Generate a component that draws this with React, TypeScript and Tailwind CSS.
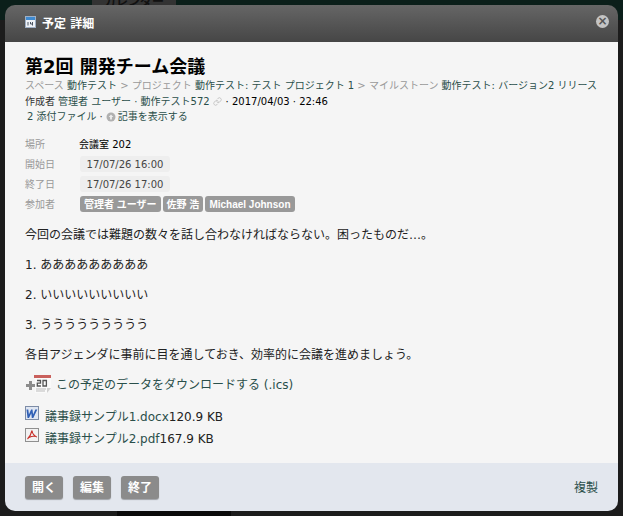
import { Link } from "lucide-react";

const font = { fontFamily: '"DejaVu Sans", "Noto Sans CJK JP", sans-serif' };
const badgeFont = { fontFamily: '"Liberation Sans", "Noto Sans CJK JP", sans-serif' };

function CalendarIcon() {
  return (
    <svg width="11" height="12" viewBox="0 0 11 12" className="mt-[-4px]">
      <rect x="0.5" y="0.5" width="10" height="11" fill="#eef2f7" stroke="#9fb0c6" />
      <rect x="1" y="1" width="9" height="3" fill="#3f8ad0" />
      <path d="M3 6v3.5M5.5 6v2h2M7.5 6v3.5" stroke="#4a5563" strokeWidth="1" fill="none" />
    </svg>
  );
}

function AddCalendarIcon() {
  return (
    <svg width="26" height="19" viewBox="0 0 26 19">
      <path d="M4 6h3v3h3v3H7v3H4v-3H1V9h3z" fill="#8c8c8c" />
      <path d="M10 3h16v10l-4 5H10z" fill="#fafafa" />
      <rect x="9" y="0" width="17" height="3" fill="#c9605c" />
      <path d="M11 14h10M11 16h9" stroke="#bbb" strokeWidth="1" />
      <path d="M22 18l4-5h-4z" fill="#d0d0d0" />
      <path d="M12 5.5h3.5v2.6h-3.2v2.9h3.6M18 5.5h3.4v5.5H18z" fill="none" stroke="#555" strokeWidth="1.3" />
    </svg>
  );
}

function WordIcon() {
  return (
    <svg width="14" height="14" viewBox="0 0 14 14">
      <rect x="0.5" y="0.5" width="13" height="13" fill="#dfe6f2" stroke="#7d8ca6" />
      <path d="M1.5 3.5h1.8l.6 5 2.2-5h1.4l.6 5 2.2-5h2l-4 8.5H6.8L6.3 7.2 4 12H2.5z" fill="#2f5fb5" />
    </svg>
  );
}

function PdfIcon() {
  return (
    <svg width="14" height="14" viewBox="0 0 14 14">
      <rect x="0.5" y="0.5" width="13" height="13" fill="#f2f2f2" stroke="#8f8f8f" />
      <path d="M7 2.5c-.6 2.5-2 6-4.5 8.5M7 2.5c.3 3 2.5 6 5 6.5M4 9.5c2-1 5-1.5 7-1" fill="none" stroke="#c8322c" strokeWidth="1.1" />
    </svg>
  );
}

function ExpandIcon() {
  return (
    <svg width="10" height="10" viewBox="0 0 10 10" className="mr-[2px]">
      <circle cx="5" cy="5" r="4.5" fill="#b0b0b0" />
      <path d="M5 2.5l2.3 2.6H5.9v2.4H4.1V5.1H2.7z" fill="#eeeeee" />
    </svg>
  );
}

function Row({ label, children }: { label: string; children: React.ReactNode }) {
  return (
    <div className="flex h-5 items-center">
      <div className="w-[55px] text-[#999]">{label}</div>
      {children}
    </div>
  );
}

function DateValue({ text }: { text: string }) {
  return <span className="flex h-4 w-[90px] items-center justify-center rounded-[3px] bg-[#eeeeee] text-[#444]">{text}</span>;
}

function Badge({ text }: { text: string }) {
  return (
    <span className="flex h-4 items-center rounded-[3px] bg-[#999] px-[4px] text-[10px] font-bold text-white" style={badgeFont}>
      {text}
    </span>
  );
}

function FooterButton({ text }: { text: string }) {
  return (
    <button className="h-[23px] w-[38px] rounded-[3px] bg-[#8b8b8b] text-[12px] font-bold text-white shadow-[0_1px_1px_rgba(0,0,0,0.3)]">
      {text}
    </button>
  );
}

export default function App() {
  return (
    <div className="relative h-[516px] w-[623px] overflow-hidden bg-[#1c1c1c] p-[5px]" style={font}>
      {/* page behind the overlay */}
      <div className="absolute top-0 left-0 h-[20px] w-full bg-[#0b1f1a]" />
      <div className="absolute top-[-8px] left-[92px] h-[20px] w-[84px] bg-[#333] pt-[1px] text-center text-[12px] font-bold text-[#111]">
        カレンダー
      </div>
      <div className="absolute bottom-0 left-[117px] h-[10px] w-[114px] bg-[#0a0a0a]" />

      <div className="relative flex h-[506px] w-[613px] flex-col overflow-hidden rounded-[10px]">
        <div className="flex h-[37px] items-center justify-between bg-gradient-to-b from-[#666666] to-[#464646] pl-[20px] pr-[9px]">
          <div className="flex items-center gap-[6px] text-[12px] font-bold text-white">
            <CalendarIcon />
            <span>予定 詳細</span>
          </div>
          <div className="mt-[-5px] flex h-[13px] w-[13px] items-center justify-center rounded-full bg-[#c4c4c4] text-[12px] leading-none font-bold text-[#555]">
            ×
          </div>
        </div>

        <div className="flex-1 bg-[#f5f5f5] pl-[20px] pr-[14px] pt-[13px] text-[10px] text-black">
          <h1 className="text-[18px] leading-[24px] font-bold text-black">第2回 開発チーム会議</h1>
          <div className="mt-[-1px] leading-[15px] whitespace-nowrap text-[#2a4f4a]">
            <span className="text-[#999]">スペース </span>動作テスト<span className="text-[#999]"> &gt; プロジェクト </span>動作テスト: テスト プロジェクト 1<span className="text-[#999]"> &gt; マイルストーン </span>動作テスト: バージョン2 リリース
          </div>
          <div className="mt-[1px] flex h-[15px] items-center leading-[15px]">
            <span className="text-[#333]">作成者</span>
            <span className="ml-[3px] text-[#2a4f4a]">管理者 ユーザー · 動作テスト572</span>
            <Link size={9} className="ml-[3px] text-[#bbb]" />
            <span className="ml-[4px]">· 2017/04/03 · 22:46</span>
          </div>
          <div className="flex h-[15px] items-center pl-[2px] leading-[15px] text-[#2a4f4a]">
            <span>2 添付ファイル</span>
            <span className="mx-[3px] text-[#333]">·</span>
            <ExpandIcon />
            <span>記事を表示する</span>
          </div>

          <div className="mt-[10px] flex flex-col">
            <Row label="場所">
              <span className="ml-[-1px]">会議室 202</span>
            </Row>
            <Row label="開始日">
              <DateValue text="17/07/26 16:00" />
            </Row>
            <Row label="終了日">
              <DateValue text="17/07/26 17:00" />
            </Row>
            <Row label="参加者">
              <div className="flex gap-[2px]">
                <Badge text="管理者 ユーザー" />
                <Badge text="佐野 浩" />
                <Badge text="Michael Johnson" />
              </div>
            </Row>
          </div>

          <div className="mt-[13px] flex flex-col gap-[13px] text-[12px] leading-[17px] text-[#222]">
            <p>今回の会議では難題の数々を話し合わなければならない。困ったものだ…。</p>
            <p>1. あああああああああ</p>
            <p>2. いいいいいいいいい</p>
            <p>3. ううううううううう</p>
            <p>各自アジェンダに事前に目を通しておき、効率的に会議を進めましょう。</p>
          </div>

          <div className="mt-[11px] flex items-center gap-[5px] text-[12px] text-[#2a4f4a]">
            <AddCalendarIcon />
            <span>この予定のデータをダウンロードする (.ics)</span>
          </div>

          <div className="mt-[12px] flex flex-col gap-[2px] text-[12px]">
            <div className="flex h-5 items-start gap-[6px]">
              <WordIcon />
              <span className="mt-[2px] text-[#2a4f4a]">
                議事録サンプル1.docx<span className="text-[#222]">120.9 KB</span>
              </span>
            </div>
            <div className="flex h-5 items-start gap-[6px]">
              <PdfIcon />
              <span className="mt-[2px] text-[#2a4f4a]">
                議事録サンプル2.pdf<span className="text-[#222]">167.9 KB</span>
              </span>
            </div>
          </div>
        </div>

        <div className="flex h-[48px] items-center justify-between bg-[#e3e7ee] pl-[20px] pr-[20px] pt-[1px]">
          <div className="flex gap-[10px]">
            <FooterButton text="開く" />
            <FooterButton text="編集" />
            <FooterButton text="終了" />
          </div>
          <span className="text-[12px] text-[#2a4f4a]">複製</span>
        </div>
      </div>
    </div>
  );
}
